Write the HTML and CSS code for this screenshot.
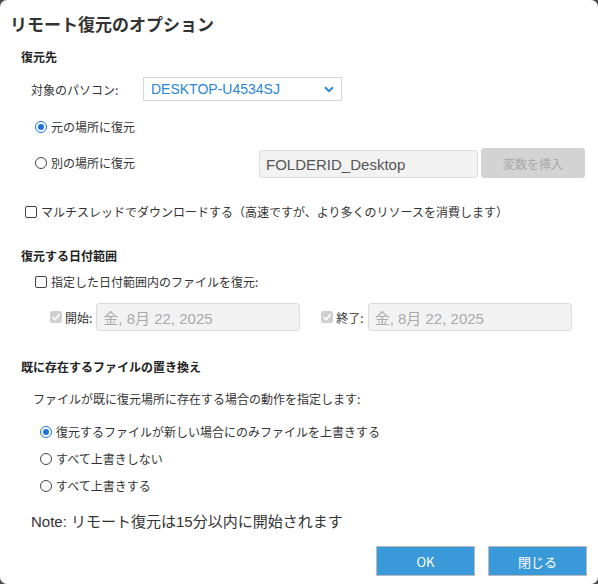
FILE: index.html
```html
<!DOCTYPE html>
<html lang="ja">
<head>
<meta charset="utf-8">
<link rel="stylesheet" href="styles.css">
</head>
<body>
<div class="dialog">
  <div class="title">リモート復元のオプション</div>

  <div class="heading h-dest">復元先</div>
  <div class="row row-pc">
    <span class="pc-label">対象のパソコン:</span>
    <div class="select">
      <span>DESKTOP-U4534SJ</span>
      <svg class="chev" width="10" height="7" viewBox="0 0 10 7"><path d="M1 1.2 L5 5.2 L9 1.2" fill="none" stroke="#2a86d6" stroke-width="2"/></svg>
    </div>
  </div>

  <div class="row row-r1">
    <span class="radio on"></span><span class="lbl">元の場所に復元</span>
  </div>
  <div class="row row-r2">
    <span class="radio"></span><span class="lbl">別の場所に復元</span>
    <div class="path-input">FOLDERID_Desktop</div>
    <div class="var-btn">変数を挿入</div>
  </div>

  <div class="row row-multi">
    <span class="check"></span><span class="lbl">マルチスレッドでダウンロードする（高速ですが、より多くのリソースを消費します）</span>
  </div>

  <div class="heading h-date">復元する日付範囲</div>
  <div class="row row-datechk">
    <span class="check"></span><span class="lbl">指定した日付範囲内のファイルを復元:</span>
  </div>
  <div class="row row-dates">
    <span class="check dis"><svg width="12" height="12" viewBox="0 0 12 12"><path d="M2.5 6.2 L5 8.6 L9.6 3.4" fill="none" stroke="#fff" stroke-width="1.6"/></svg></span>
    <span class="dlbl">開始:</span>
    <div class="date-input">金, 8月 22, 2025</div>
    <span class="check dis end"><svg width="12" height="12" viewBox="0 0 12 12"><path d="M2.5 6.2 L5 8.6 L9.6 3.4" fill="none" stroke="#fff" stroke-width="1.6"/></svg></span>
    <span class="dlbl">終了:</span>
    <div class="date-input">金, 8月 22, 2025</div>
  </div>

  <div class="heading h-rep">既に存在するファイルの置き換え</div>
  <div class="desc">ファイルが既に復元場所に存在する場合の動作を指定します:</div>
  <div class="row row-ra">
    <span class="radio on"></span><span class="lbl">復元するファイルが新しい場合にのみファイルを上書きする</span>
  </div>
  <div class="row row-rb">
    <span class="radio"></span><span class="lbl">すべて上書きしない</span>
  </div>
  <div class="row row-rb">
    <span class="radio"></span><span class="lbl">すべて上書きする</span>
  </div>

  <div class="note">Note: リモート復元は15分以内に開始されます</div>

  <div class="buttons">
    <div class="btn">OK</div>
    <div class="btn">閉じる</div>
  </div>
</div>
</body>
</html>
```

FILE: styles.css
```css
html, body {
  margin: 0;
  padding: 0;
  background: #4a4a4a;
}
body {
  width: 598px;
  height: 584px;
  overflow: hidden;
  font-family: "Liberation Sans", "Noto Sans CJK JP", sans-serif;
  color: #333;
  font-size: 12px;
}
.dialog {
  width: 598px;
  height: 584px;
  background: #fff;
  border-radius: 7px;
  box-sizing: border-box;
  padding-top: 14px;
  display: flex;
  flex-direction: column;
}
.title {
  font-family: "Noto Sans CJK JP", sans-serif;
  font-weight: bold;
  font-size: 17px;
  line-height: 20px;
  height: 20px;
  padding-left: 10px;
  color: #333;
}
.heading {
  font-family: "Noto Sans CJK JP", sans-serif;
  font-weight: bold;
  font-size: 12px;
  line-height: 16px;
  height: 16px;
  padding-left: 21px;
  color: #222;
}
.h-dest { margin-top: 15px; }
.h-date { margin-top: 28px; }
.h-rep { margin-top: 28px; }

.row {
  display: flex;
  align-items: center;
}
.lbl {
  font-family: "Noto Sans CJK JP", sans-serif;
  font-size: 12px;
  line-height: 16px;
  margin-left: 4px;
  color: #333;
}
.row-pc {
  margin-top: 12px;
  height: 24px;
  padding-left: 31px;
}
.pc-label {
  font-family: "Noto Sans CJK JP", sans-serif;
  width: 112px;
}
.select {
  width: 199px;
  height: 24px;
  box-sizing: border-box;
  border: 1px solid #d6d6d6;
  display: flex;
  align-items: center;
  justify-content: space-between;
  padding: 0 7px 0 7px;
  font-family: "Liberation Sans", sans-serif;
  font-size: 14px;
  color: #2a86d6;
}
.chev { margin-top: 1px; }

.radio {
  width: 12px;
  height: 12px;
  box-sizing: border-box;
  border: 1px solid #444;
  border-radius: 50%;
  background: #fff;
  position: relative;
  flex: none;
}
.radio.on {
  border: 1.5px solid #1a73d9;
}
.radio.on::after {
  content: "";
  position: absolute;
  left: 1.5px;
  top: 1.5px;
  width: 6px;
  height: 6px;
  border-radius: 50%;
  background: #1a73d9;
}
.check {
  width: 12px;
  height: 12px;
  box-sizing: border-box;
  border: 1px solid #444;
  border-radius: 2px;
  background: #fff;
  flex: none;
  display: flex;
}
.check.dis {
  border: none;
  background: #cfcfcf;
}

.row-r1 {
  margin-top: 18px;
  height: 16px;
  padding-left: 35px;
}
.row-r2 {
  margin-top: 13px;
  height: 30px;
  padding-left: 35px;
}
.path-input {
  margin-left: 124px;
  width: 219px;
  height: 28px;
  box-sizing: border-box;
  background: #f2f2f2;
  border: 1px solid #dcdcdc;
  border-radius: 3px;
  display: flex;
  align-items: center;
  padding-left: 6px;
  font-family: "Liberation Sans", sans-serif;
  font-size: 15px;
  color: #555;
  margin-top: 2px;
}
.var-btn {
  margin-left: 3px;
  width: 104px;
  height: 30px;
  background: #d3d3d3;
  border-radius: 3px;
  display: flex;
  align-items: center;
  justify-content: center;
  font-family: "Noto Sans CJK JP", sans-serif;
  font-size: 12px;
  color: #a8a8a8;
}
.row-multi {
  margin-top: 26px;
  height: 16px;
  padding-left: 25px;
}
.row-datechk {
  margin-top: 10px;
  height: 16px;
  padding-left: 35px;
}
.row-dates {
  margin-top: 13px;
  height: 28px;
  padding-left: 50px;
}
.dlbl {
  font-family: "Noto Sans CJK JP", sans-serif;
  font-size: 12px;
  margin-left: 3px;
  margin-right: 4px;
  color: #333;
}
.date-input {
  width: 204px;
  height: 28px;
  box-sizing: border-box;
  background: #f2f2f2;
  border: 1px solid #dcdcdc;
  border-radius: 3px;
  display: flex;
  align-items: center;
  padding-left: 6px;
  font-family: "Liberation Sans", "Noto Sans CJK JP", sans-serif;
  font-size: 15px;
  color: #aaa;
}
.check.end { margin-left: 21px; }

.desc {
  font-family: "Noto Sans CJK JP", sans-serif;
  margin-top: 16px;
  height: 16px;
  line-height: 16px;
  padding-left: 33px;
}
.row-ra {
  margin-top: 17px;
  height: 16px;
  padding-left: 40px;
}
.row-rb {
  margin-top: 11px;
  height: 16px;
  padding-left: 40px;
}
.note {
  margin-top: 18px;
  height: 20px;
  line-height: 20px;
  padding-left: 31px;
  font-family: "Liberation Sans", "Noto Sans CJK JP", sans-serif;
  font-size: 15px;
  color: #333;
}
.buttons {
  margin-top: 14px;
  display: flex;
  justify-content: flex-end;
  gap: 13px;
  padding-right: 11px;
}
.btn {
  width: 99px;
  height: 30px;
  box-sizing: border-box;
  background: #3a99d8;
  border: 1px solid #bcbcbc;
  color: #fff;
  font-family: "Noto Sans CJK JP", sans-serif;
  font-size: 13px;
  display: flex;
  align-items: center;
  justify-content: center;
}
```
